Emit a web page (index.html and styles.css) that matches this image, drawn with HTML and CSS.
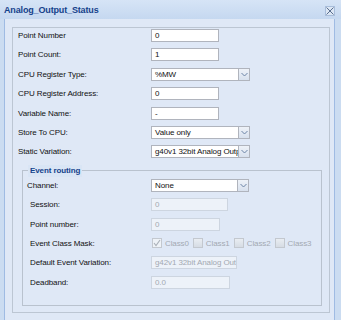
FILE: index.html
```html
<!DOCTYPE html>
<html>
<head>
<meta charset="utf-8">
<link rel="stylesheet" href="styles.css">
</head>
<body>
<div class="win">
  <div class="title">
    <span class="title-text">Analog_Output_Status</span>
    <span class="close"><svg width="8" height="8" viewBox="0 0 8 8"><path d="M0.5 0.5 L7.5 7.5 M7.5 0.5 L0.5 7.5" stroke="#5a6f8f" stroke-width="1" fill="none"/></svg></span>
  </div>
  <div class="frame">
    <div class="panel">
      <div class="row"><span class="lbl">Point Number</span><span class="field w68">0</span></div>
      <div class="row"><span class="lbl">Point Count:</span><span class="field w68">1</span></div>
      <div class="row"><span class="lbl">CPU Register Type:</span><span class="field sel w99"><span class="val">%MW</span><span class="trig"><svg width="7" height="5" viewBox="0 0 7 5"><path d="M0.5 1 L3.5 4 L6.5 1" stroke="#6d84a6" fill="none"/></svg></span></span></div>
      <div class="row"><span class="lbl">CPU Register Address:</span><span class="field w68">0</span></div>
      <div class="row"><span class="lbl">Variable Name:</span><span class="field w68">-</span></div>
      <div class="row"><span class="lbl">Store To CPU:</span><span class="field sel w99"><span class="val">Value only</span><span class="trig"><svg width="7" height="5" viewBox="0 0 7 5"><path d="M0.5 1 L3.5 4 L6.5 1" stroke="#6d84a6" fill="none"/></svg></span></span></div>
      <div class="row"><span class="lbl">Static Variation:</span><span class="field sel w99"><span class="val">g40v1 32bit Analog Output</span><span class="trig"><svg width="7" height="5" viewBox="0 0 7 5"><path d="M0.5 1 L3.5 4 L6.5 1" stroke="#6d84a6" fill="none"/></svg></span></span></div>
      <fieldset class="group">
        <legend>Event routing</legend>
        <div class="row grow"><span class="lbl first">Channel:</span><span class="field sel w98"><span class="val">None</span><span class="trig"><svg width="7" height="5" viewBox="0 0 7 5"><path d="M0.5 1 L3.5 4 L6.5 1" stroke="#6d84a6" fill="none"/></svg></span></span></div>
        <div class="row grow"><span class="lbl">Session:</span><span class="field dis w77">0</span></div>
        <div class="row grow"><span class="lbl">Point number:</span><span class="field dis w69">0</span></div>
        <div class="row grow"><span class="lbl">Event Class Mask:</span>
          <span class="checks">
            <span class="cb on"><svg width="8" height="8" viewBox="0 0 8 8"><path d="M1 4 L3 6.5 L7 1" stroke="#a9b0b8" stroke-width="1.1" fill="none"/></svg></span><span class="ct">Class0</span>
            <span class="cb"></span><span class="ct">Class1</span>
            <span class="cb"></span><span class="ct">Class2</span>
            <span class="cb"></span><span class="ct">Class3</span>
          </span>
        </div>
        <div class="row grow"><span class="lbl">Default Event Variation:</span><span class="field dis w86">g42v1 32bit Analog Out</span></div>
        <div class="row grow"><span class="lbl">Deadband:</span><span class="field dis w79">0.0</span></div>
      </fieldset>
    </div>
  </div>
</div>
</body>
</html>
```
FILE: styles.css
```css
* { box-sizing: border-box; }
html, body { margin: 0; padding: 0; }
body {
  width: 341px;
  height: 323px;
  background: #ffffff;
  font-family: "Liberation Sans", Arial, sans-serif;
  font-size: 8px;
  letter-spacing: -0.1px;
  color: #111;
  overflow: hidden;
}
.win {
  background: #cbdcf1;
  height: 320px;
  display: flex;
  flex-direction: column;
}
.title {
  height: 19px;
  display: flex;
  align-items: center;
  justify-content: space-between;
  padding: 0 6px 0 4px;
  background: linear-gradient(#d6e4f6, #c5d8f0);
}
.title-text {
  font-weight: bold;
  font-size: 9px;
  color: #15428b;
  letter-spacing: -0.15px;
}
.close {
  width: 10px;
  height: 10px;
  border: 1px solid #a9bedb;
  background: #dbe6f4;
  display: flex;
  align-items: center;
  justify-content: center;
  margin-top: 2px;
}
.close svg { display: block; }
.frame {
  flex: 1;
  margin: 0 6px 0 4px;
  border-left: 1px solid #9fbbe3;
  border-right: 1px solid #9fbbe3;
  background: #dfe8f6;
  padding: 8px 4px 7px 7px;
}
.panel {
  border: 1px solid #bcc6d3;
  height: 286px;
  padding: 1px 0 0 0;
}
.row {
  height: 19.4px;
  display: flex;
  align-items: flex-start;
}
.lbl {
  width: 138px;
  padding-left: 5px;
  line-height: 13px;
  white-space: nowrap;
}
.field {
  height: 13px;
  border: 1px solid #b0b4bd;
  background: #fff;
  line-height: 11px;
  padding-left: 3px;
  white-space: nowrap;
  overflow: hidden;
}
.w68 { width: 68px; }
.w99 { width: 99px; }
.w98 { width: 98px; }
.w77 { width: 77px; }
.w69 { width: 69px; }
.w86 { width: 86px; }
.w79 { width: 79px; }
.sel {
  display: flex;
  padding-left: 0;
}
.sel .val {
  flex: 1;
  padding-left: 3px;
  overflow: hidden;
}
.trig {
  width: 11px;
  height: 11px;
  border-left: 1px solid #b0b4bd;
  background: linear-gradient(#eef2f8, #d8e1ee);
  display: flex;
  align-items: center;
  justify-content: center;
}
.trig svg { display: block; }
.group {
  margin: 0 7px 0 9px;
  padding: 2px 0 10px 0;
  border: 1px solid #b9c2ce;
  min-width: 0;
}
.group legend {
  margin-left: 5px;
  padding: 0 2px;
  font-weight: bold;
  color: #15428b;
  line-height: 12px;
  background: #d9e5f5;
}
.grow .lbl {
  width: 128px;
  padding-left: 7px;
}
.grow .lbl.first { padding-left: 4px; }
.dis {
  background: #edf2f9;
  border-color: #cdd5e0;
  color: #a3a9b2;
}
.checks {
  display: flex;
  align-items: center;
  height: 13px;
  padding-left: 1px;
}
.cb {
  width: 10px;
  height: 10px;
  border: 1px solid #c3c8cf;
  background: linear-gradient(#e9edf2, #d6dce4);
  margin-right: 3px;
  display: flex;
  align-items: center;
  justify-content: center;
}
.cb.on { background: #eef2f7; }
.cb svg { display: block; }
.ct {
  color: #a3a9b2;
  margin-right: 4px;
}
```
